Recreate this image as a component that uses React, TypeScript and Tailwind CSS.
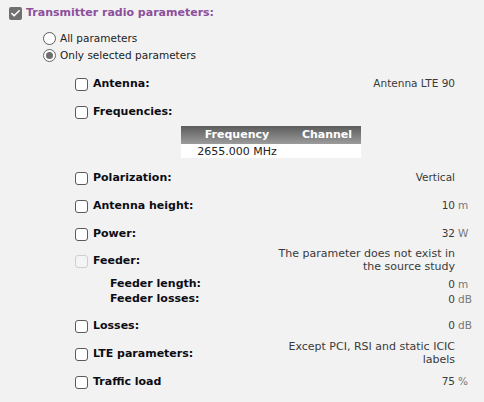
import { Check } from 'lucide-react'

type Param = {
  label: string
  value?: React.ReactNode
  unit?: string
  h: string
  disabled?: boolean
  wide?: boolean
}

function Box({ disabled }: { disabled?: boolean }) {
  return (
    <span
      className={
        'block w-[13px] h-[13px] rounded-[3px] border shrink-0 ' +
        (disabled ? 'border-[#cfcfcf] bg-[#f4f4f4]' : 'border-[#5a5a5a] bg-white')
      }
    />
  )
}

function Row({ p }: { p: Param }) {
  return (
    <div className={'flex items-center ' + p.h}>
      <Box disabled={p.disabled} />
      <span className="ml-[5px] font-bold text-[11px] text-[#0c0c14]">{p.label}</span>
      <span
        className={
          'ml-auto text-right text-[#3a3a3a] whitespace-nowrap ' +
          (p.wide ? 'text-[11px] leading-[13px] mb-[3px]' : 'text-[10.5px]')
        }
      >
        {p.value}
      </span>
      <span className="w-[29px] pl-[3px] text-[10.5px] text-[#777] shrink-0">{p.unit}</span>
    </div>
  )
}

export default function App() {
  const top: Param[] = [
    { label: 'Antenna:', value: 'Antenna LTE 90', h: 'h-[28px]' },
    { label: 'Frequencies:', h: 'h-[28px]' },
  ]
  const mid: Param[] = [
    { label: 'Polarization:', value: 'Vertical', h: 'h-[28px]' },
    { label: 'Antenna height:', value: '10', unit: 'm', h: 'h-[28px]' },
    { label: 'Power:', value: '32', unit: 'W', h: 'h-[28px]' },
    {
      label: 'Feeder:',
      value: (
        <>
          The parameter does not exist in
          <br />
          the source study
        </>
      ),
      h: 'h-[26px]',
      disabled: true,
      wide: true,
    },
  ]
  const feeder = [
    { label: 'Feeder length:', value: '0', unit: 'm' },
    { label: 'Feeder losses:', value: '0', unit: 'dB' },
  ]
  const bottom: Param[] = [
    { label: 'Losses:', value: '0', unit: 'dB', h: 'h-[28px]' },
    {
      label: 'LTE parameters:',
      value: (
        <>
          Except PCI, RSI and static ICIC
          <br />
          labels
        </>
      ),
      h: 'h-[28px]',
      wide: true,
    },
    { label: 'Traffic load', value: '75', unit: '%', h: 'h-[28px]' },
  ]

  return (
    <div className="w-[484px] h-[402px] overflow-hidden bg-[#f2f2f2] font-['DejaVu_Sans',sans-serif]">
      <div className="flex items-center pl-[9px] pt-[6px] h-[20px]">
        <span className="w-[13px] h-[13px] rounded-[2px] bg-[#707070] flex items-center justify-center">
          <Check size={11} strokeWidth={3.5} color="white" />
        </span>
        <span className="ml-[4px] text-[11px] font-bold text-[#8c4f9c]">Transmitter radio parameters:</span>
      </div>

      <div className="pl-[43px] pt-[10px]">
        <div className="flex items-center h-[17px]">
          <span className="w-[13px] h-[13px] rounded-full border border-[#5a5a5a] bg-white" />
          <span className="ml-[4px] text-[10.5px] text-[#222]">All parameters</span>
        </div>
        <div className="flex items-center h-[17px]">
          <span className="w-[13px] h-[13px] rounded-full border border-[#666] bg-white flex items-center justify-center">
            <span className="w-[7px] h-[7px] rounded-full bg-[#6e6e6e]" />
          </span>
          <span className="ml-[4px] text-[10.5px] text-[#222]">Only selected parameters</span>
        </div>
      </div>

      <div className="pl-[75px] pt-[6px]">
        {top.map(p => (
          <Row key={p.label} p={p} />
        ))}

        <div className="ml-[106px] w-[180px]">
          <div className="grid grid-cols-[112px_68px] h-[18px] items-center bg-gradient-to-b from-[#5c5c5c] to-[#9c9c9c] text-white font-bold text-[11px]">
            <span className="text-center">Frequency</span>
            <span className="text-center">Channel</span>
          </div>
          <div className="grid grid-cols-[112px_68px] h-[14px] items-center bg-white text-[11px] text-[#222]">
            <span className="text-center">2655.000 MHz</span>
            <span />
          </div>
        </div>

        <div className="pt-[6px]">
          {mid.map(p => (
            <Row key={p.label} p={p} />
          ))}
        </div>

        <div className="pt-[3px] pb-[5px]">
          {feeder.map(f => (
            <div key={f.label} className="flex items-center h-[15px]">
              <span className="ml-[35px] font-bold text-[11px] text-[#0c0c14]">{f.label}</span>
              <span className="ml-auto text-[10.5px] text-[#3a3a3a]">{f.value}</span>
              <span className="w-[29px] pl-[3px] text-[10.5px] text-[#777]">{f.unit}</span>
            </div>
          ))}
        </div>

        {bottom.map(p => (
          <Row key={p.label} p={p} />
        ))}
      </div>
    </div>
  )
}
